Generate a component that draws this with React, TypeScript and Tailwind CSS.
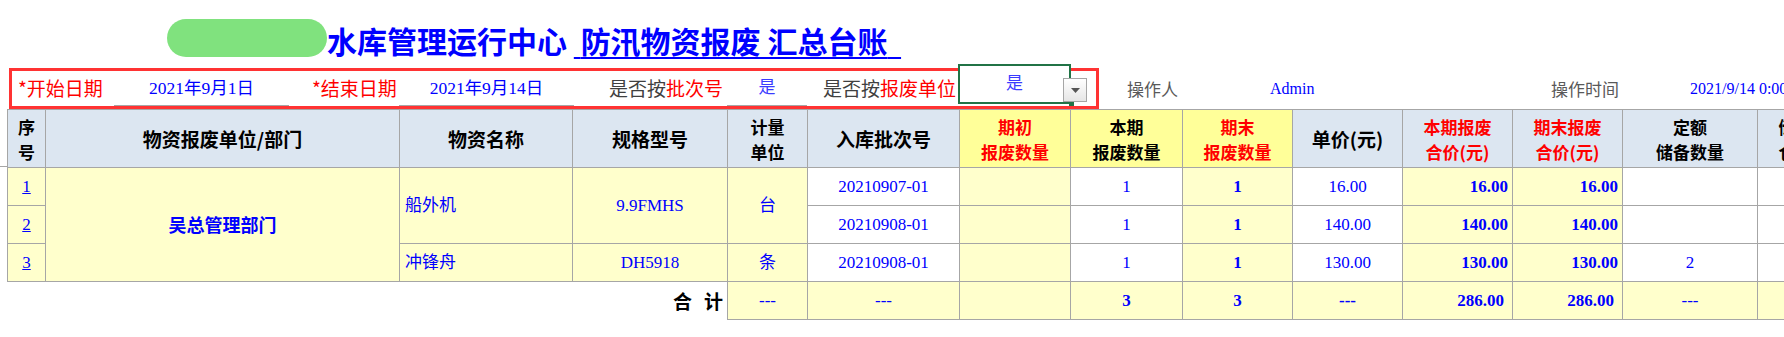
import React from 'react';

const SANS = "font-['Noto_Sans_CJK_SC',sans-serif]";
const SERIF = "font-['Liberation_Serif','Noto_Sans_CJK_SC',serif]";
const B = 'border border-[#a6a6a6]';
const Y = 'bg-[#ffffcc]';

interface Head {
  lines: string[];
  yellow?: boolean;
  red?: boolean;
}

const HEADS: Head[] = [
  { lines: ['序', '号'] },
  { lines: ['物资报废单位/部门'] },
  { lines: ['物资名称'] },
  { lines: ['规格型号'] },
  { lines: ['计量', '单位'] },
  { lines: ['入库批次号'] },
  { lines: ['期初', '报废数量'], yellow: true, red: true },
  { lines: ['本期', '报废数量'], yellow: true },
  { lines: ['期末', '报废数量'], yellow: true, red: true },
  { lines: ['单价(元)'] },
  { lines: ['本期报废', '合价(元)'], red: true },
  { lines: ['期末报废', '合价(元)'], red: true },
  { lines: ['定额', '储备数量'] },
  { lines: ['储备', '仓库'] },
];

const WIDTHS = [
  'w-[38px]', 'w-[354px]', 'w-[173px]', 'w-[155px]', 'w-[80px]', 'w-[152px]', 'w-[111px]',
  'w-[112px]', 'w-[110px]', 'w-[110px]', 'w-[110px]', 'w-[110px]', 'w-[135px]', 'w-[76px]',
];

const FilterBar = () => {
  return (
    <div className="flex items-center h-[41px]">
      <div className="relative shrink-0 ml-[9px] w-[1090px] h-[41px] border-[3px] border-[#ff3333] flex items-stretch">
        <div className={`shrink-0 pl-[6px] w-[102px] flex items-center text-[19px] text-[#ff0000] ${SANS}`}>*开始日期</div>
        <div className={`shrink-0 w-[175px] flex items-center justify-center border-b border-[#a6a6a6] text-[17.5px] text-[#0000ff] ${SERIF}`}>
          2021年9月1日
        </div>
        <div className={`shrink-0 ml-[23px] w-[87px] flex items-center text-[19px] text-[#ff0000] ${SANS}`}>*结束日期</div>
        <div className={`shrink-0 w-[175px] flex items-center justify-center border-b border-[#a6a6a6] text-[17.5px] text-[#0000ff] ${SERIF}`}>
          2021年9月14日
        </div>
        <div className={`shrink-0 ml-[35px] w-[118px] flex items-center text-[19px] text-[#404040] ${SANS}`}>
          是否按<span className="text-[#ff0000]">批次号</span>
        </div>
        <div className={`shrink-0 w-[80px] flex items-center justify-center border-b border-[#a6a6a6] text-[17px] text-[#3b3bff] ${SERIF}`}>
          是
        </div>
        <div className={`shrink-0 ml-[16px] flex items-center text-[19px] text-[#404040] ${SANS}`}>
          是否按<span className="text-[#ff0000]">报废单位</span>
        </div>

        {/* selected cell with dropdown */}
        <div className={`absolute left-[946px] top-[-7px] w-[113px] h-[40px] border-2 border-[#217346] bg-white flex items-center justify-center text-[17px] text-[#3b3bff] ${SERIF}`}>
          是
        </div>
        <div className="absolute left-[1057px] top-[30px] w-[5px] h-[5px] bg-[#217346]" />
        <div className="absolute left-[1051px] top-[7px] w-[24px] h-[24px] border border-[#a6a6a6] bg-gradient-to-b from-white to-[#e6e6e6] flex items-center justify-center">
          <svg width="9" height="5" viewBox="0 0 9 5">
            <polygon points="0,0 9,0 4.5,5" fill="#555" />
          </svg>
        </div>
      </div>

      <div className={`shrink-0 ml-[28px] w-[143px] text-[17px] text-[#595959] ${SANS}`}>操作人</div>
      <div className={`shrink-0 w-[281px] text-[16px] text-[#0000ff] ${SERIF}`}>Admin</div>
      <div className={`shrink-0 w-[139px] text-[17px] text-[#595959] ${SANS}`}>操作时间</div>
      <div className={`shrink-0 whitespace-nowrap text-[16px] text-[#0000ff] ${SERIF}`}>2021/9/14 0:00:00</div>
    </div>
  );
};

const App = () => {
  return (
    <div className="relative w-[1784px] h-[337px] overflow-hidden bg-white">
      {/* title */}
      <div className="flex items-start h-[68px]">
        <div className="shrink-0 ml-[167px] mt-[19px] w-[160px] h-[38px] rounded-[19px] bg-[#80e27e]" />
        <div className={`mt-[25px] whitespace-nowrap leading-[30px] text-[30px] font-bold text-[#0000ff] ${SANS}`}>
          水库管理运行中心{' '}
          <span className="underline decoration-2 underline-offset-[4px]">
            {'\u00a0'}防汛物资报废 汇总台账{'\u00a0\u00a0'}
          </span>
        </div>
      </div>

      <FilterBar />

      <div className="flex">
        <div className="shrink-0 w-[7px] h-[58px] border-b border-[#a6a6a6]" />
        <table className={`shrink-0 w-[1826px] table-fixed border-collapse text-[17px] text-[#0000ff] ${SERIF}`}>
          <colgroup>
            {WIDTHS.map((w, i) => (
              <col key={i} className={w} />
            ))}
          </colgroup>
          <thead>
            <tr className="h-[58px]">
              {HEADS.map((h, i) => (
                <th
                  key={i}
                  className={`${B} p-0 text-center font-bold ${SANS} ${h.yellow ? 'bg-[#ffff99]' : 'bg-[#dce6f1]'} ${
                    h.red ? 'text-[#ff0000]' : 'text-black'
                  } ${h.lines.length > 1 ? 'text-[17px] leading-[25px]' : 'text-[19px] leading-[25px]'} whitespace-nowrap overflow-hidden`}
                >
                  {h.lines.map((l, j) => (
                    <div key={j}>{l}</div>
                  ))}
                </th>
              ))}
            </tr>
          </thead>
          <tbody>
            <tr className="h-[38px]">
              <td className={`${B} ${Y} text-center`}><span className="underline">1</span></td>
              <td rowSpan={3} className={`${B} ${Y} text-center text-[18px] font-bold ${SANS}`}>吴总管理部门</td>
              <td rowSpan={2} className={`${B} ${Y} pl-[5px]`}>船外机</td>
              <td rowSpan={2} className={`${B} ${Y} text-center`}>9.9FMHS</td>
              <td rowSpan={2} className={`${B} ${Y} text-center`}>台</td>
              <td className={`${B} text-center`}>20210907-01</td>
              <td className={`${B} ${Y}`} />
              <td className={`${B} text-center`}>1</td>
              <td className={`${B} ${Y} text-center font-bold`}>1</td>
              <td className={`${B} text-center`}>16.00</td>
              <td className={`${B} ${Y} text-right pr-[4px] font-bold`}>16.00</td>
              <td className={`${B} ${Y} text-right pr-[4px] font-bold`}>16.00</td>
              <td className={B} />
              <td className={B} />
            </tr>
            <tr className="h-[38px]">
              <td className={`${B} ${Y} text-center`}><span className="underline">2</span></td>
              <td className={`${B} text-center`}>20210908-01</td>
              <td className={`${B} ${Y}`} />
              <td className={`${B} text-center`}>1</td>
              <td className={`${B} ${Y} text-center font-bold`}>1</td>
              <td className={`${B} text-center`}>140.00</td>
              <td className={`${B} ${Y} text-right pr-[4px] font-bold`}>140.00</td>
              <td className={`${B} ${Y} text-right pr-[4px] font-bold`}>140.00</td>
              <td className={B} />
              <td className={B} />
            </tr>
            <tr className="h-[38px]">
              <td className={`${B} ${Y} text-center`}><span className="underline">3</span></td>
              <td className={`${B} ${Y} pl-[5px]`}>冲锋舟</td>
              <td className={`${B} ${Y} text-center`}>DH5918</td>
              <td className={`${B} ${Y} text-center`}>条</td>
              <td className={`${B} text-center`}>20210908-01</td>
              <td className={`${B} ${Y}`} />
              <td className={`${B} text-center`}>1</td>
              <td className={`${B} ${Y} text-center font-bold`}>1</td>
              <td className={`${B} text-center`}>130.00</td>
              <td className={`${B} ${Y} text-right pr-[4px] font-bold`}>130.00</td>
              <td className={`${B} ${Y} text-right pr-[4px] font-bold`}>130.00</td>
              <td className={`${B} text-center`}>2</td>
              <td className={B} />
            </tr>
            <tr className="h-[38px]">
              <td colSpan={4} className={`border-0 text-right pr-[4px] text-[19px] font-bold text-black ${SANS}`}>
                合<span className="ml-[12px]">计</span>
              </td>
              <td className={`${B} ${Y} text-center`}>---</td>
              <td className={`${B} ${Y} text-center`}>---</td>
              <td className={`${B} ${Y}`} />
              <td className={`${B} ${Y} text-center font-bold`}>3</td>
              <td className={`${B} ${Y} text-center font-bold`}>3</td>
              <td className={`${B} ${Y} text-center font-bold`}>---</td>
              <td className={`${B} ${Y} text-right pr-[8px] font-bold`}>286.00</td>
              <td className={`${B} ${Y} text-right pr-[8px] font-bold`}>286.00</td>
              <td className={`${B} ${Y} text-center`}>---</td>
              <td className={`${B} ${Y}`} />
            </tr>
          </tbody>
        </table>
      </div>
    </div>
  );
};

export default App;
